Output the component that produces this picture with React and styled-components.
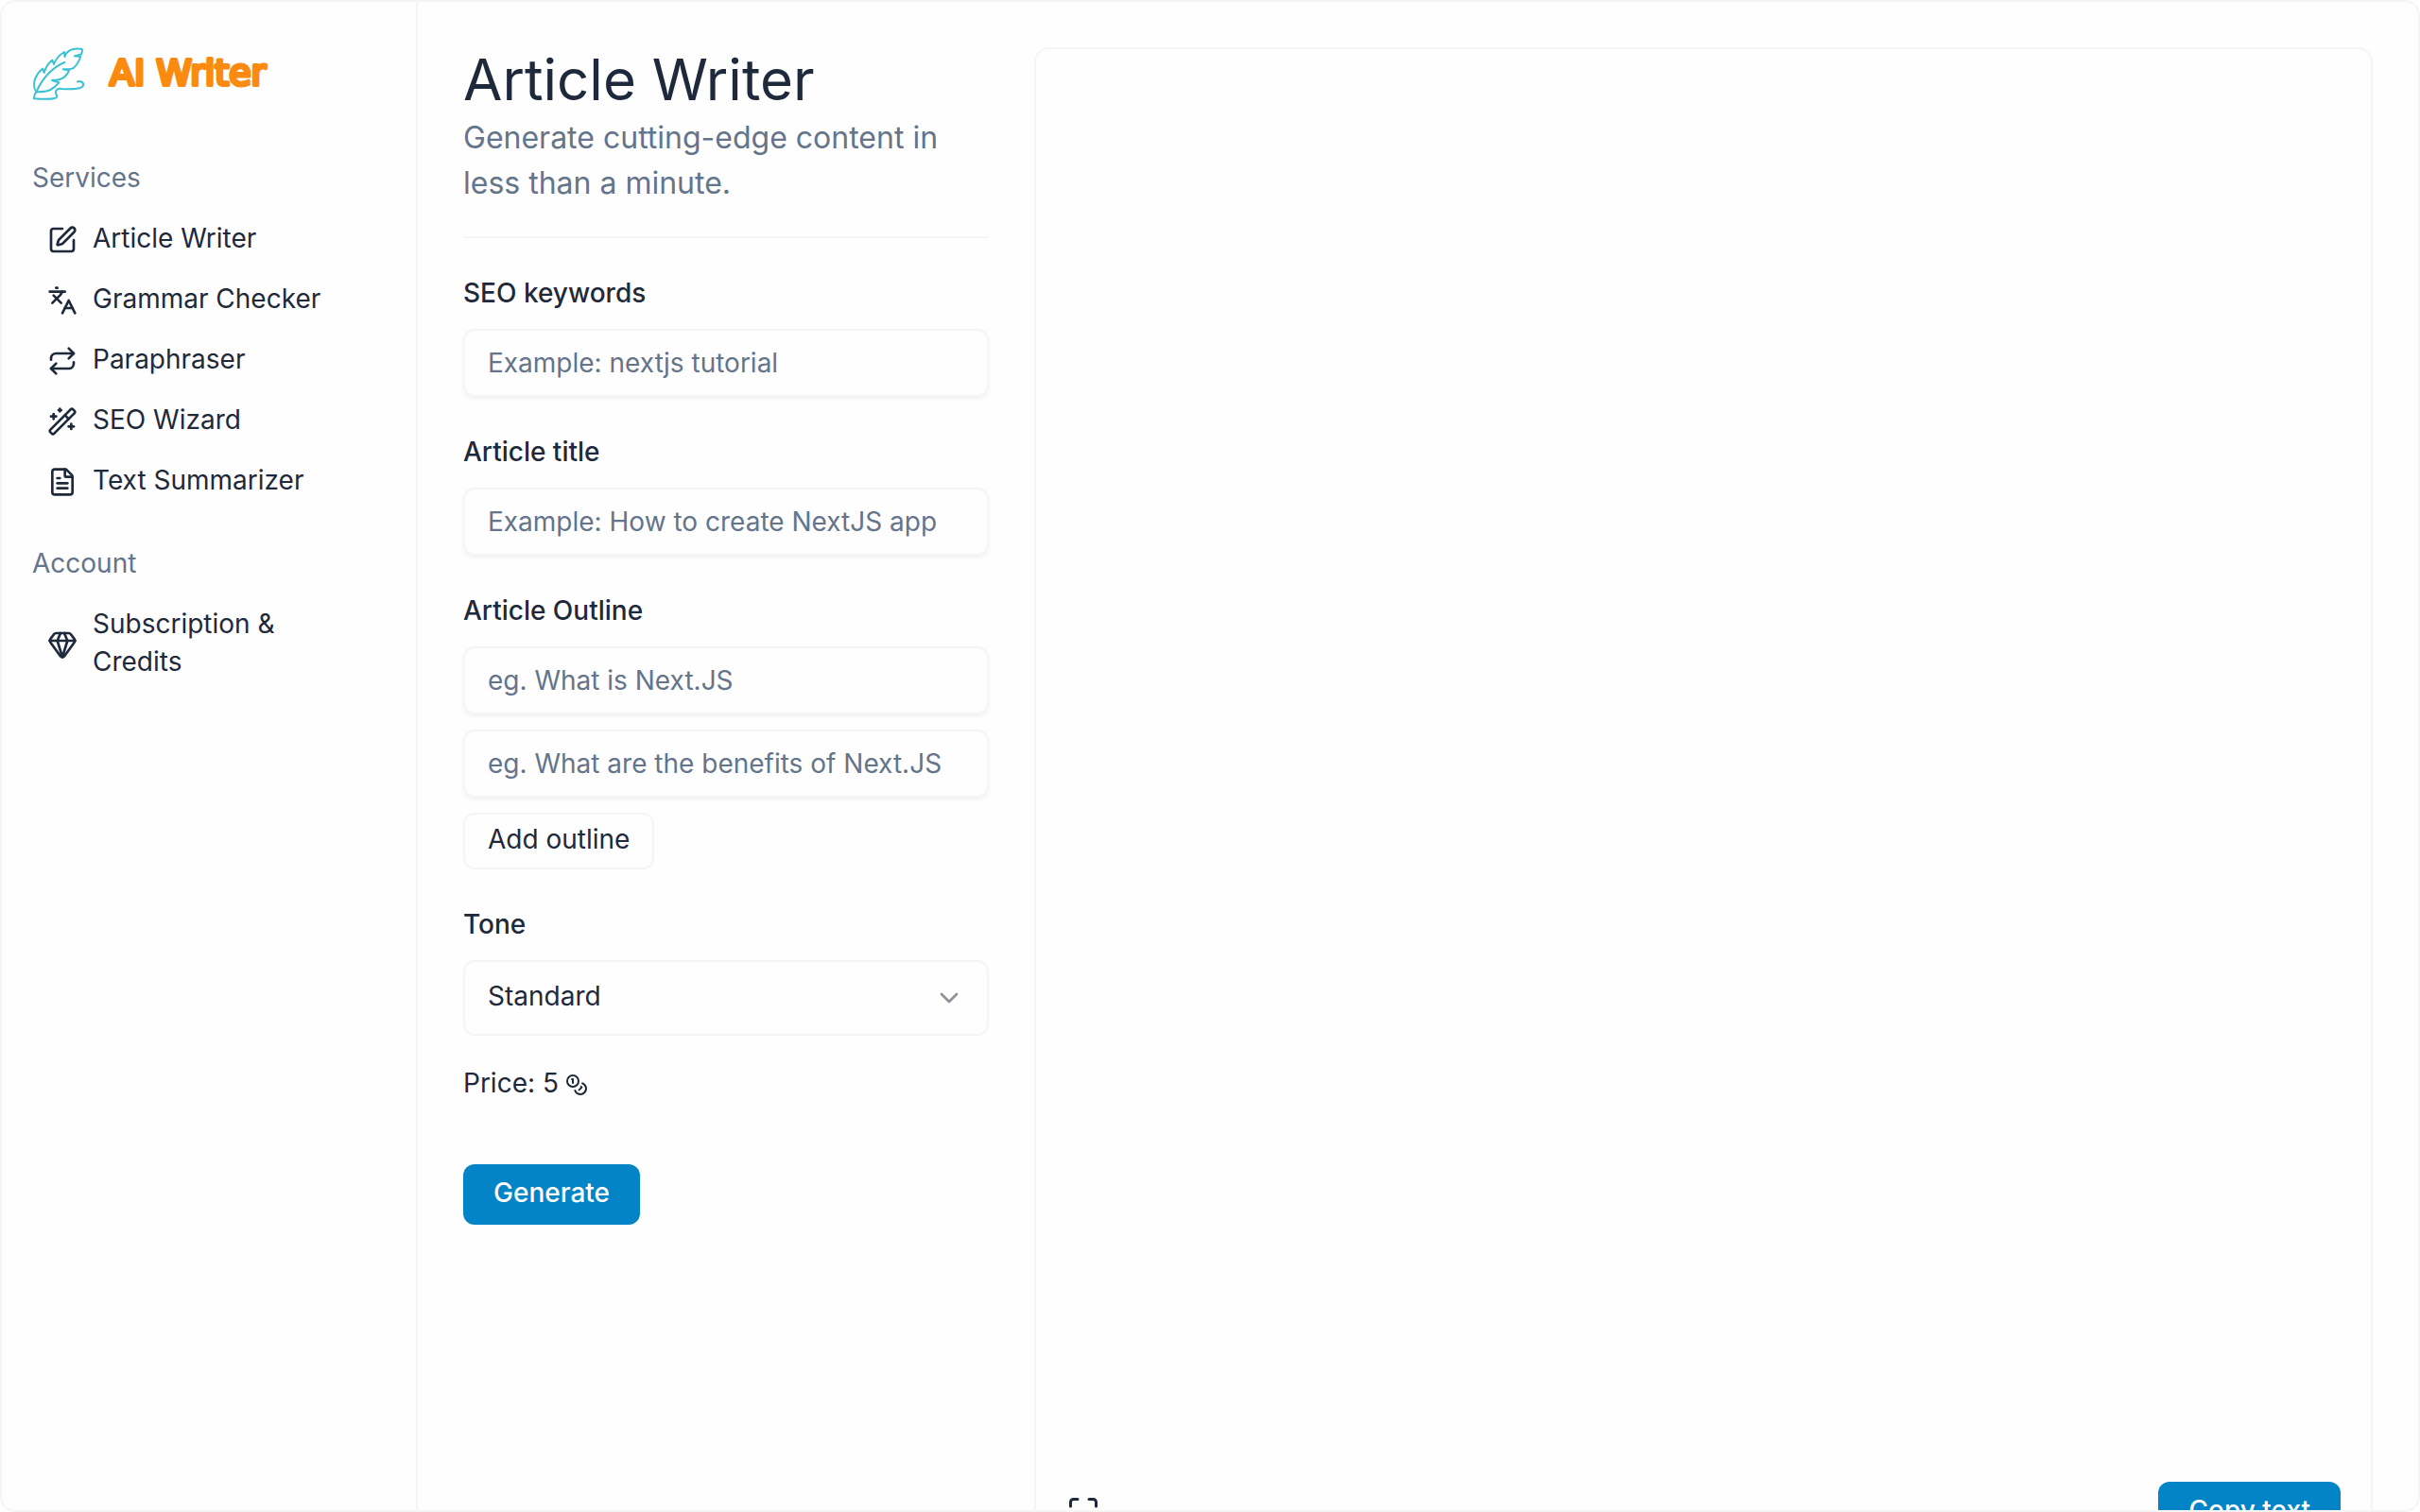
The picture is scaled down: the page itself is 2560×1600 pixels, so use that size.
import React from "react";
import styled, { createGlobalStyle } from "styled-components";
import {
  SquarePen, Languages, Repeat, WandSparkles, FileText, Gem, Coins, ChevronDown, Maximize,
} from "lucide-react";

const ink = "#1e293b";
const muted = "#64748b";
const line = "#f5f5f5";
const primary = "#0284c7";

const GlobalStyle = createGlobalStyle`
  *, *::before, *::after { box-sizing: border-box; }
  body {
    margin: 0;
    background: #fff;
    color: ${ink};
    font-family: Inter, "Liberation Sans", sans-serif;
    font-size: 28px;
    line-height: 40px;
  }
  button, input, select { font: inherit; color: inherit; }
`;

const Frame = styled.div`
  display: flex;
  height: 100vh;
  overflow: hidden;
  border: 2px solid ${line};
  border-radius: 16px;
  background: #fefefe;
`;

const Sidebar = styled.aside`
  flex: 0 0 440px;
  padding: 48px 32px;
  border-right: 2px solid ${line};
`;

const Brand = styled.a`
  display: block;
  height: 56px;
  margin-bottom: 62px;

  svg { display: block; }
`;

const NavGroup = styled.nav`
  margin-bottom: 36px;
`;

const NavHeading = styled.h2`
  margin: 0 0 12px;
  font-size: 28px;
  font-weight: 400;
  color: ${muted};
`;

const NavList = styled.ul`
  margin: 0;
  padding: 0;
  list-style: none;
`;

const NavLink = styled.a`
  display: flex;
  align-items: center;
  gap: 16px;
  padding: 12px 16px;
  color: inherit;
  text-decoration: none;

  svg { flex: none; margin-top: 4px; }
`;

const Main = styled.main`
  flex: 1;
  min-width: 0;
  display: grid;
  grid-template-columns: 556px minmax(0, 1fr);
  align-items: start;
  gap: 48px;
  padding: 48px;
  overflow: hidden;
`;

const Header = styled.header`
  padding-bottom: 32px;
  border-bottom: 2px solid ${line};
`;

const Title = styled.h1`
  margin: 0 0 4px;
  font-size: 60px;
  line-height: 68px;
  font-weight: 400;
`;

const Subtitle = styled.p`
  margin: 0;
  font-size: 32px;
  line-height: 48px;
  color: ${muted};
`;

const Form = styled.form`
  display: flex;
  flex-direction: column;
  gap: 36px;
  padding-top: 36px;
`;

const Field = styled.div`
  display: flex;
  flex-direction: column;
  align-items: flex-start;
  gap: 16px;
`;

const Label = styled.label`
  line-height: 44px;
  font-weight: 500;
`;

const TextInput = styled.input`
  width: 100%;
  height: 72px;
  padding: 0 24px;
  border: 2px solid ${line};
  border-radius: 12px;
  background: transparent;
  box-shadow: 0 2px 4px rgba(0, 0, 0, 0.05);
  outline: none;

  &::placeholder { color: ${muted}; opacity: 1; }
`;

const OutlineButton = styled.button`
  padding: 6px 24px 10px;
  border: 2px solid ${line};
  border-radius: 12px;
  background: transparent;
`;

const SelectBox = styled.div`
  display: grid;
  width: 100%;
  align-items: center;

  > * { grid-area: 1 / 1; }
  svg { justify-self: end; margin-right: 26px; opacity: 0.5; pointer-events: none; }
`;

const Select = styled.select`
  appearance: none;
  width: 100%;
  height: 80px;
  padding: 0 64px 4px 24px;
  border: 2px solid ${line};
  border-radius: 12px;
  background: transparent;
  outline: none;
`;

const Price = styled.p`
  display: flex;
  align-items: center;
  gap: 7px;
  margin: 0;
  line-height: 28px;

  svg { margin-top: 4px; }
`;

const PrimaryButton = styled.button`
  padding: 10px 32px 14px;
  border: 0;
  border-radius: 12px;
  background: ${primary};
  color: #fff;
  font-weight: 500;
`;

const FormActions = styled.div`
  display: flex;
  padding-top: 36px;
`;

const Editor = styled.section`
  display: flex;
  flex-direction: column;
  min-height: calc(100vh + 16px);
  padding: 32px;
  border: 2px solid ${line};
  border-radius: 16px;
`;

const EditorBar = styled.div`
  display: flex;
  align-items: center;
  justify-content: space-between;
  margin-top: auto;
`;

const IconButton = styled.button`
  display: flex;
  padding: 0;
  border: 0;
  background: transparent;
`;

function Logo() {
  return (
    <svg width="270" height="60" viewBox="0 0 270 60" role="img" aria-label="AI Writer">
      <g fill="none" stroke="#39c2d3" strokeWidth="2" strokeLinejoin="round" strokeLinecap="round">
        <path d="M4.3 47.3C1.5 43 1.5 37 3.3 33C5 29 8 25 11.3 22.5L12.7 27C14 22 17 17 21.3 13.5L23 18C25 12 29 8 34 5L34.5 10C36 4 42 1 49 1.5C52 1.5 53.5 2 53 4L52 7.5L45 9.3L51.3 10C49.5 15 47 19 44 21.7C41 24 36 23 32.7 23.3L39.3 24.5C37 29 33 33 29 34C26 35 23 34.5 21 35L28.3 37.3C26 40 23 43 19.3 45C14 47.5 9 47.5 4.3 47.3Z" />
        <path d="M4.3 47.3C10 35 20 22 34.3 16" />
        <path d="M4.3 47.3C2.5 49.5 2 52 1.8 54.3C10 54.8 18 55.5 24 54C28 53 25 50 25 47.5C25 44.5 28 43.5 31 44C38 44.5 46 44.5 51 43C55 41.5 55 38 52 36.5C51 36 49 36 48 36.5" />
      </g>
      <text x="82" y="40" fontFamily="DejaVu Sans, sans-serif" fontSize="38"
        fill="#fa8a10" stroke="#fa8a10" strokeWidth="4" strokeLinejoin="round">AI Writer</text>
    </svg>
  );
}

const services = [
  ["Article Writer", SquarePen],
  ["Grammar Checker", Languages],
  ["Paraphraser", Repeat],
  ["SEO Wizard", WandSparkles],
  ["Text Summarizer", FileText],
];
const account = [["Subscription & Credits", Gem]];

function Navigation({ title, items }) {
  return (
    <NavGroup aria-label={title}>
      <NavHeading>{title}</NavHeading>
      <NavList>
        {items.map(([name, Icon]) => (
          <li key={name}>
            <NavLink href="#"><Icon size={32} />{name}</NavLink>
          </li>
        ))}
      </NavList>
    </NavGroup>
  );
}

export default function App() {
  return (
    <>
      <GlobalStyle />
      <Frame>
        <Sidebar>
          <Brand href="#"><Logo /></Brand>
          <Navigation title="Services" items={services} />
          <Navigation title="Account" items={account} />
        </Sidebar>
        <Main>
          <div>
            <Header>
              <Title>Article Writer</Title>
              <Subtitle>Generate cutting-edge content in less than a minute.</Subtitle>
            </Header>
            <Form onSubmit={(e) => e.preventDefault()}>
              <Field>
                <Label htmlFor="keywords">SEO keywords</Label>
                <TextInput id="keywords" placeholder="Example: nextjs tutorial" />
              </Field>
              <Field>
                <Label htmlFor="title">Article title</Label>
                <TextInput id="title" placeholder="Example: How to create NextJS app" />
              </Field>
              <Field>
                <Label htmlFor="outline">Article Outline</Label>
                <TextInput id="outline" placeholder="eg. What is Next.JS" />
                <TextInput aria-label="Article Outline 2" placeholder="eg. What are the benefits of Next.JS" />
                <OutlineButton type="button">Add outline</OutlineButton>
              </Field>
              <Field>
                <Label htmlFor="tone">Tone</Label>
                <SelectBox>
                  <Select id="tone"><option>Standard</option></Select>
                  <ChevronDown size={32} />
                </SelectBox>
              </Field>
              <Price>Price: 5 <Coins size={24} /></Price>
              <FormActions>
                <PrimaryButton type="submit">Generate</PrimaryButton>
              </FormActions>
            </Form>
          </div>
          <Editor>
            <EditorBar>
              <IconButton type="button" aria-label="Full screen"><Maximize size={36} /></IconButton>
              <PrimaryButton type="button">Copy text</PrimaryButton>
            </EditorBar>
          </Editor>
        </Main>
      </Frame>
    </>
  );
}
